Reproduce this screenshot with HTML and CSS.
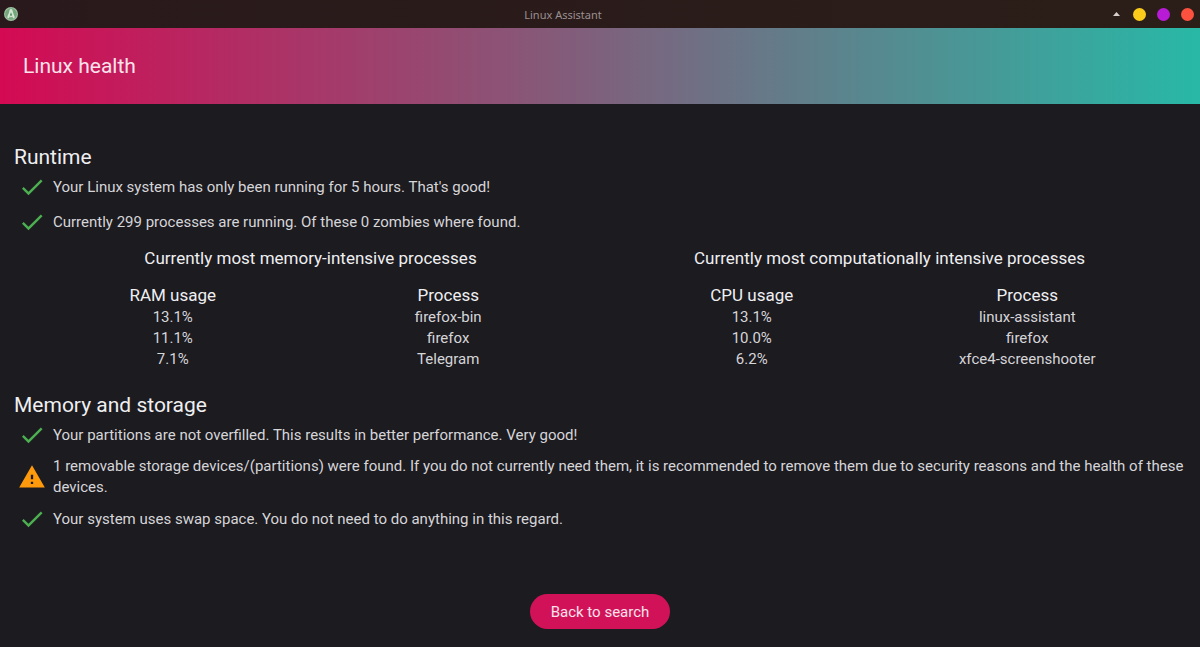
FILE: index.html
```html
<!DOCTYPE html>
<html lang="en">
<head>
  <meta charset="UTF-8" />
  <meta name="viewport" content="width=device-width, initial-scale=1.0" />
  <title>Linux Assistant</title>
  <link rel="stylesheet" href="styles.css">
</head>
<body>
  <svg class="symbols" aria-hidden="true">
    <symbol id="check" viewBox="0 0 24 24">
      <path d="M9 16.17L4.83 12l-1.42 1.41L9 19 21 7l-1.41-1.41z" fill="#4caf50" />
    </symbol>
    <symbol id="warning" viewBox="0 0 24 24">
      <path d="M1 21h22L12 2 1 21zm12-3h-2v-2h2v2zm0-4h-2v-4h2v4z" fill="#ff9a0c" />
    </symbol>
  </svg>

  <div class="titlebar">
    <svg class="app-icon" viewBox="0 0 14 14" aria-hidden="true">
      <circle cx="7" cy="7" r="7" fill="#9dbfa0" />
      <circle cx="7" cy="7" r="5.8" fill="#74a67e" />
      <path d="M7 2C5.800 2 5.400 3.200 5.200 4.800 5 6.600 3.400 8.200 3.200 10.600L5 11.400 5.600 9.400 7 10.600 8.400 9.400 9 11.400 10.800 10.600C10.600 8.200 9 6.600 8.800 4.800 8.600 3.200 8.200 2 7 2z" fill="#d3e6d2" />
      <path d="M7 5.200L5.800 8 7 9.200 8.200 8z" fill="#5c966b" />
    </svg>
    <span class="window-title">Linux Assistant</span>
    <div class="window-buttons">
      <button class="shade" aria-label="Shade"></button>
      <button class="dot yellow" aria-label="Minimize"></button>
      <button class="dot purple" aria-label="Maximize"></button>
      <button class="dot red" aria-label="Close"></button>
    </div>
  </div>

  <header class="header">
    <h1>Linux health</h1>
  </header>

  <main>
    <section>
      <h2>Runtime</h2>
      <div class="message">
        <svg class="icon" aria-hidden="true"><use href="#check" /></svg>
        <p>Your Linux system has only been running for 5 hours. That's good!</p>
      </div>
      <div class="message">
        <svg class="icon" aria-hidden="true"><use href="#check" /></svg>
        <p>Currently 299 processes are running. Of these 0 zombies where found.</p>
      </div>
      <div class="processes">
        <table>
          <caption>Currently most memory-intensive processes</caption>
          <thead>
            <tr><th>RAM usage</th><th>Process</th></tr>
          </thead>
          <tbody>
            <tr><td>13.1%</td><td>firefox-bin</td></tr>
            <tr><td>11.1%</td><td>firefox</td></tr>
            <tr><td>7.1%</td><td>Telegram</td></tr>
          </tbody>
        </table>
        <table>
          <caption>Currently most computationally intensive processes</caption>
          <thead>
            <tr><th>CPU usage</th><th>Process</th></tr>
          </thead>
          <tbody>
            <tr><td>13.1%</td><td>linux-assistant</td></tr>
            <tr><td>10.0%</td><td>firefox</td></tr>
            <tr><td>6.2%</td><td>xfce4-screenshooter</td></tr>
          </tbody>
        </table>
      </div>
    </section>

    <section>
      <h2>Memory and storage</h2>
      <div class="message">
        <svg class="icon" aria-hidden="true"><use href="#check" /></svg>
        <p>Your partitions are not overfilled. This results in better performance. Very good!</p>
      </div>
      <div class="message">
        <svg class="icon" aria-hidden="true"><use href="#warning" /></svg>
        <p>1 removable storage devices/(partitions) were found. If you do not currently need them, it is recommended to remove them due to security reasons and the health of these devices.</p>
      </div>
      <div class="message">
        <svg class="icon" aria-hidden="true"><use href="#check" /></svg>
        <p>Your system uses swap space. You do not need to do anything in this regard.</p>
      </div>
    </section>
  </main>

  <footer>
    <button class="back">Back to search</button>
  </footer>
</body>
</html>
```
FILE: styles.css
```css
* {
  box-sizing: border-box;
}
body {
  margin: 0;
  min-height: 100vh;
  display: flex;
  flex-direction: column;
  background-color: #1c1b20;
  color: #d6d5d8;
  font-family: Roboto, sans-serif;
  font-size: 15px;
  line-height: 21px;
}
h1, h2, p {
  margin: 0;
  font-weight: normal;
}
.symbols {
  display: none;
}
.titlebar {
  height: 28px;
  padding: 0 6px 0 4px;
  display: grid;
  grid-template-columns: 1fr auto 1fr;
  align-items: center;
  background: linear-gradient(to right, #29191c, #2b1e18);
}
.app-icon {
  width: 14px;
  height: 14px;
}
.window-title {
  padding: 0 72px 0 0;
  color: #9a8f90;
  font-family: "Noto Sans", sans-serif;
  font-size: 11px;
}
.window-buttons {
  display: flex;
  justify-content: flex-end;
  align-items: center;
  gap: 11px;
}
.window-buttons button {
  padding: 0;
  border: none;
}
.dot {
  width: 13px;
  height: 13px;
  border-radius: 50%;
}
.yellow {
  background-color: #fbcb1c;
}
.purple {
  background-color: #b81bd6;
}
.red {
  background-color: #fd513f;
}
.shade {
  width: 7px;
  height: 4px;
  margin-right: 2px;
  background-color: #d9d0cc;
  clip-path: polygon(50% 0, 100% 100%, 0 100%);
}
.header {
  height: 76px;
  padding: 0 23px;
  display: flex;
  align-items: center;
  background: linear-gradient(to right, #d40a53, #28b8a6);
}
h1 {
  color: #fbe3ec;
  font-size: 21px;
}
main {
  flex: 1;
  padding: 41px 14px 0;
}
h2 {
  color: #efeff1;
  font-size: 21px;
  line-height: 24px;
}
.message {
  display: flex;
  align-items: center;
  gap: 7px;
  padding: 4px 0 3px 4px;
}
.icon {
  width: 28px;
  height: 28px;
  flex-shrink: 0;
}
.processes {
  display: grid;
  grid-template-columns: 1fr 1fr;
  gap: 28px;
  padding: 7px 21px 23px;
}
table {
  width: 100%;
  table-layout: fixed;
  border-collapse: collapse;
  text-align: center;
}
caption, th {
  color: #efeff1;
  font-size: 17px;
  font-weight: normal;
}
caption {
  padding: 2px 0 16px;
}
th, td {
  padding: 0;
}
th {
  padding-bottom: 1px;
}
footer {
  display: flex;
  justify-content: center;
  padding: 18px;
}
.back {
  height: 35px;
  padding: 0 21px;
  border: none;
  border-radius: 18px;
  background-color: #d11259;
  color: #fbe3ec;
  font-family: inherit;
  font-size: 15px;
  cursor: pointer;
}
```
